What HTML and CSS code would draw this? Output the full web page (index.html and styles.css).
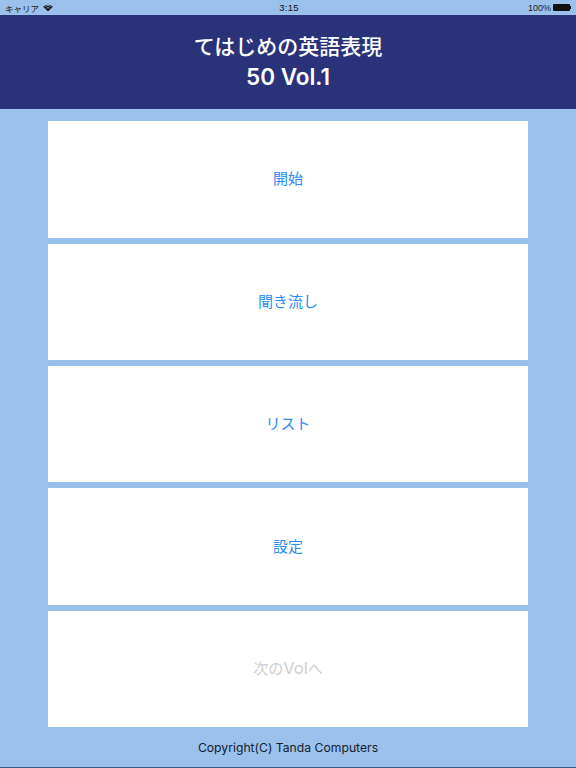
FILE: index.html
```html
<!DOCTYPE html>
<html lang="ja">
<head>
<meta charset="utf-8">
<title>てはじめの英語表現50 Vol.1</title>
<link rel="stylesheet" href="styles.css">
</head>
<body>
<div class="status">
  <div class="status-left"><span>キャリア</span>
    <svg class="wifi" viewBox="0 0 12 9" width="10" height="7.5"><path d="M6 9 L.2 3.2 A8.2 8.2 0 0 1 11.8 3.2Z" fill="#111"/><path d="M2.1 3.4 A5.6 5.6 0 0 1 9.9 3.4" fill="none" stroke="#9ac0ec" stroke-width=".9"/><path d="M3.8 5.2 A3.2 3.2 0 0 1 8.2 5.2" fill="none" stroke="#9ac0ec" stroke-width=".9"/></svg>
  </div>
  <div class="status-time">3:15</div>
  <div class="status-right"><span>100%</span><span class="battery"></span><span class="battery-tip"></span></div>
</div>
<header class="title"><h1>てはじめの英語表現<br><span class="volume">50 Vol.1</span></h1></header>
<main class="menu">
  <button class="item"><span class="label">開始</span></button>
  <button class="item"><span class="label">聞き流し</span></button>
  <button class="item"><span class="label">リスト</span></button>
  <button class="item"><span class="label">設定</span></button>
  <button class="item disabled"><span class="label">次の<span class="latin">Vol</span>へ</span></button>
</main>
<footer class="copy">Copyright(C) Tanda Computers</footer>
</body>
</html>
```
FILE: styles.css
```css
* { box-sizing: border-box; }
html, body { margin: 0; height: 100%; }
body {
  width: 576px; height: 768px; overflow: hidden;
  background: #9ac0ec;
  font-family: "Inter", "Liberation Sans", "Noto Sans CJK JP", sans-serif;
  display: flex; flex-direction: column;
  border-bottom: 1px solid #3a5a80;
}
.status {
  height: 15px; display: grid; grid-template-columns: 1fr auto 1fr; align-items: center;
  padding: 0 5px; font-size: 8.5px; color: #222;
  font-family: "Liberation Sans", "Noto Sans CJK JP", sans-serif;
}
.status-left { display: flex; align-items: center; gap: 4px; }
.status-time { font-size: 9.5px; letter-spacing: .2px; color: #111; padding-left: 2px; }
.status-right { display: flex; align-items: center; justify-content: flex-end; gap: 2px; font-size: 9px; }
.battery { width: 17px; height: 7px; background: #111; border-radius: 1px; }
.battery-tip { width: 1px; height: 3px; background: #111; margin-left: -2px; }
.title {
  height: 94px; background: #2a337a; display: flex; align-items: center; justify-content: center;
}
.title h1 {
  margin: 0 0 2px; color: #fff; text-align: center; font-size: 21px; font-weight: 500; line-height: 31px;
  font-family: "Noto Sans CJK JP", sans-serif;
}
.volume { font-family: "Inter", sans-serif; font-weight: 600; font-size: 22.5px; }
.menu {
  padding: 12.2px 48px 0; display: flex; flex-direction: column; gap: 6px;
}
.item {
  height: 116.4px; background: #fff; border: 0; padding: 0 0 2px;
  color: #2a8cf5; font-size: 15px;
  font-family: "Noto Sans CJK JP", sans-serif;
}
.label { display: block; line-height: 20px; }
.latin { font-family: "Inter", sans-serif; font-size: 16.5px; }
.item.disabled { color: #cfcfcf; }
.copy {
  flex: 1; display: flex; align-items: center; justify-content: center;
  font-size: 12.2px; color: #14202e;
}
```
